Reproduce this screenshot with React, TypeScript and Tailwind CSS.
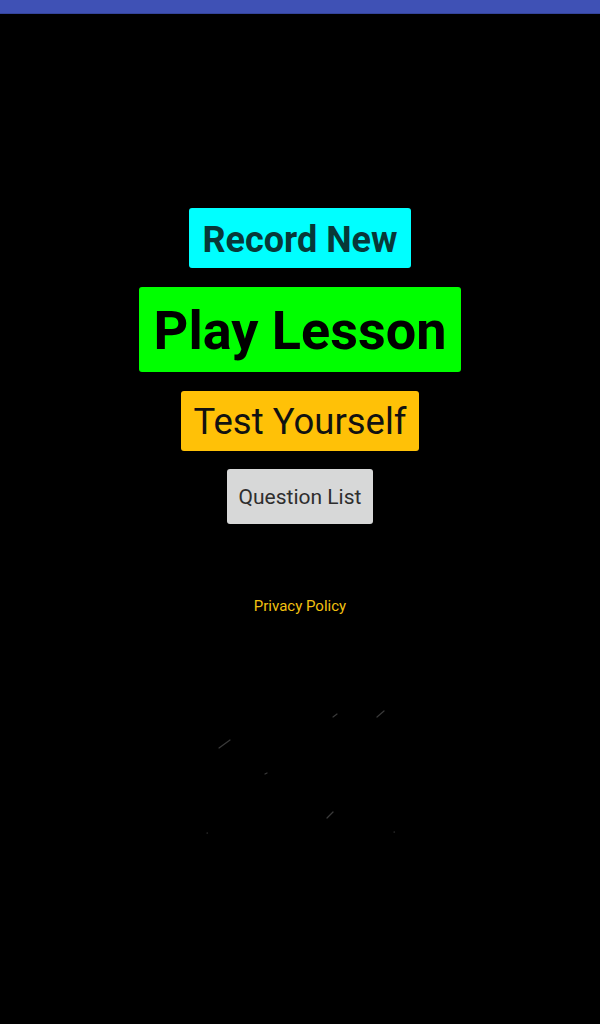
export default function App() {
  return (
    <div className="min-h-[1024px] w-[600px] bg-black flex flex-col" style={{ fontFamily: 'Roboto, "Liberation Sans", sans-serif' }}>
      {/* Status bar */}
      <div className="h-[14px] w-full bg-[#3f51b5] border-b border-[#34449a]" />

      {/* Menu */}
      <div className="flex flex-col items-center pt-[194px]">
        <button className="h-[60px] px-[14px] pt-[3px] rounded-[3px] bg-[#00ffff] text-[#083838] text-[36px] font-bold leading-none">
          Record New
        </button>
        <button className="mt-[19px] h-[85px] px-[15px] pt-[3px] rounded-[3px] bg-[#00ff00] text-black text-[54px] font-bold leading-none">
          Play Lesson
        </button>
        <button className="mt-[19px] h-[60px] px-[12px] pt-[3px] rounded-[3px] bg-[#ffc107] text-[#111] text-[36.5px] leading-none">
          Test Yourself
        </button>
        <button className="mt-[18px] h-[55px] px-[12px] pt-[2px] rounded-[3px] bg-[#d7d8d8] text-[#2e2e2e] text-[21px] leading-none">
          Question List
        </button>
        <a className="mt-[73px] text-[15px] leading-[18px] text-[#f2c010]">Privacy Policy</a>
      </div>

      <div className="flex justify-center mt-[90px]">
        <svg width="200" height="130" viewBox="200 705 200 130" stroke="#3a3a3a" strokeWidth="1.2" strokeLinecap="round">
          <line x1="219" y1="748" x2="230" y2="740" />
          <line x1="333" y1="717" x2="337" y2="714" />
          <line x1="377" y1="717" x2="384" y2="711" />
          <line x1="265" y1="774" x2="267" y2="773" />
          <line x1="327" y1="818" x2="333" y2="812" />
          <line x1="207" y1="833" x2="207.5" y2="833" />
          <line x1="394" y1="832" x2="394.5" y2="832" />
        </svg>
      </div>
    </div>
  );
}
